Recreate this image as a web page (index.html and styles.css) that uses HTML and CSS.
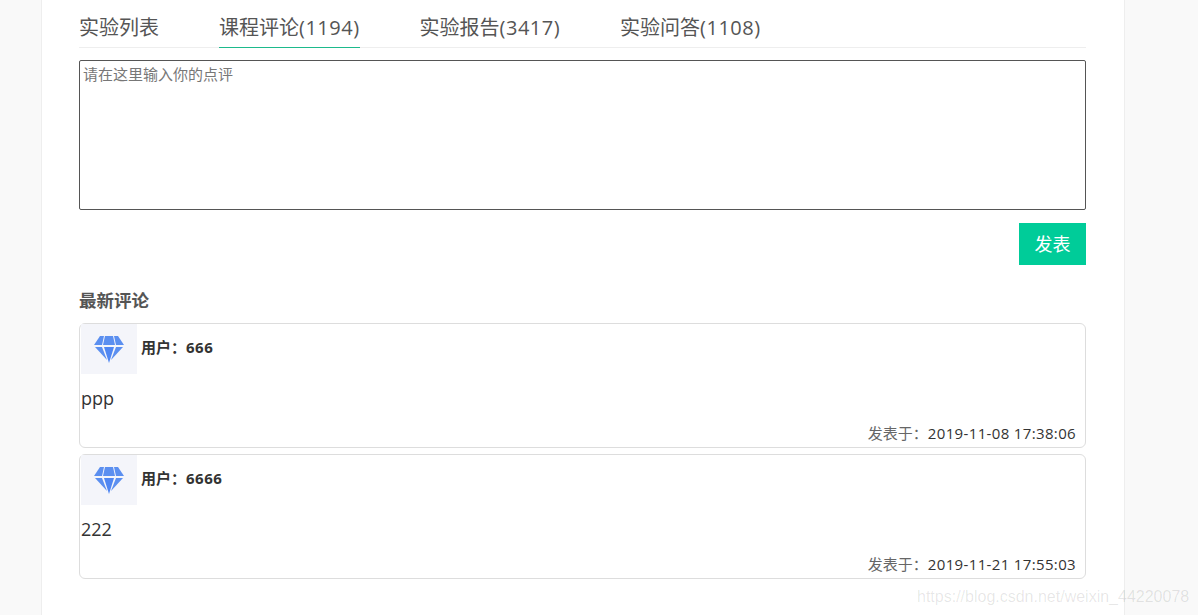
FILE: index.html
```html
<!DOCTYPE html>
<html lang="zh-CN">
<head>
    <meta charset="UTF-8">
    <meta name="viewport" content="width=device-width, initial-scale=1.0">
    <title>课程评论</title>
    <link rel="stylesheet" href="styles.css">
</head>
<body>
    <div class="container">
        <ul class="tabs">
            <li class="tab">实验列表</li>
            <li class="tab active">课程评论<span class="count">(1194)</span></li>
            <li class="tab">实验报告<span class="count">(3417)</span></li>
            <li class="tab">实验问答<span class="count">(1108)</span></li>
        </ul>

        <textarea class="comment-input" placeholder="请在这里输入你的点评"></textarea>

        <div class="controls">
            <button class="btn-submit">发表</button>
        </div>

        <h3 class="section-title">最新评论</h3>

        <div class="comment">
            <div class="comment-header">
                <div class="avatar">
                    <svg width="30" height="27" viewBox="0 0 30 27">
                        <path fill="#5b8ff0" d="M6 0h4L8 9H0z"/>
                        <path fill="#5b8ff0" d="M11 0h8l2 9H9z"/>
                        <path fill="#5b8ff0" d="M20 0h4l6 9h-8z"/>
                        <path fill="#5b8ff0" d="M1 11h7l5 13z"/>
                        <path fill="#4f86f2" d="M10 11h10l-5 16z"/>
                        <path fill="#5b8ff0" d="M29 11h-7l-5 13z"/>
                    </svg>
                </div>
                <span class="username">用户：<span class="user-id">666</span></span>
            </div>
            <div class="comment-body">ppp</div>
            <div class="comment-date">发表于：<span class="date-value">2019-11-08 17:38:06</span></div>
        </div>

        <div class="comment">
            <div class="comment-header">
                <div class="avatar">
                    <svg width="30" height="27" viewBox="0 0 30 27">
                        <path fill="#5b8ff0" d="M6 0h4L8 9H0z"/>
                        <path fill="#5b8ff0" d="M11 0h8l2 9H9z"/>
                        <path fill="#5b8ff0" d="M20 0h4l6 9h-8z"/>
                        <path fill="#5b8ff0" d="M1 11h7l5 13z"/>
                        <path fill="#4f86f2" d="M10 11h10l-5 16z"/>
                        <path fill="#5b8ff0" d="M29 11h-7l-5 13z"/>
                    </svg>
                </div>
                <span class="username">用户：<span class="user-id">6666</span></span>
            </div>
            <div class="comment-body">222</div>
            <div class="comment-date">发表于：<span class="date-value">2019-11-21 17:55:03</span></div>
        </div>
    </div>

    <div class="watermark">https://blog.csdn.net/weixin_44220078</div>
</body>
</html>
```

FILE: styles.css
```css
html, body {
    height: 100%;
}

body {
    margin: 0;
    background-color: #f9f9f9;
    font-family: "Open Sans", "Noto Sans CJK SC", sans-serif;
    color: #333;
    overflow: hidden;
}

.container {
    box-sizing: border-box;
    width: 1084px;
    height: 615px;
    margin-left: 41px;
    padding: 0 38px 0 37px;
    background: white;
    border-left: 1px solid #eee;
    border-right: 1px solid #eee;
}

.tabs {
    display: flex;
    gap: 60px;
    height: 48px;
    box-sizing: border-box;
    margin: 0;
    padding: 0;
    list-style: none;
    border-bottom: 1px solid #eee;
}

.tab {
    height: 48px;
    box-sizing: border-box;
    padding-top: 13px;
    font-size: 20px;
    line-height: 30px;
    color: #555;
}

.tab.active {
    border-bottom: 1px solid #1dba8c;
}

.count {
    letter-spacing: 0.5px;
}

.comment-input {
    display: block;
    box-sizing: border-box;
    width: 100%;
    height: 150px;
    margin: 12px 0 0;
    padding: 4px 3px;
    border: 1px solid #555;
    border-radius: 2px;
    outline: none;
    resize: none;
    font-family: inherit;
    font-size: 15px;
    line-height: 18px;
}

.comment-input::placeholder {
    color: #777;
}

.controls {
    display: flex;
    justify-content: flex-end;
    margin-top: 13px;
}

.btn-submit {
    width: 67px;
    height: 42px;
    padding: 0 0 2px;
    border: none;
    background: #00cc99;
    color: white;
    font-family: inherit;
    font-size: 18px;
}

.section-title {
    margin: 23px 0 11px;
    font-size: 17.5px;
    line-height: 24px;
    font-weight: 700;
    color: #555;
}

.comment {
    box-sizing: border-box;
    height: 125px;
    margin-bottom: 6px;
    padding: 0 9px 0 1px;
    border: 1px solid #ddd;
    border-radius: 6px;
}

.comment-header {
    display: flex;
    align-items: center;
    gap: 4px;
}

.avatar {
    display: flex;
    align-items: center;
    justify-content: center;
    width: 56px;
    height: 50px;
    background: #f4f5fa;
}

.username {
    padding-bottom: 5px;
    font-size: 15px;
    line-height: 20px;
    font-weight: 700;
    color: #333;
}

.user-id {
    letter-spacing: 0.5px;
}

.comment-body {
    margin-top: 10px;
    font-size: 18px;
    line-height: 28px;
    color: #333;
}

.comment-date {
    margin-top: 11px;
    text-align: right;
    font-size: 15px;
    line-height: 20px;
    color: #666;
}

.date-value {
    color: #333;
    letter-spacing: 0.35px;
}

.watermark {
    position: absolute;
    left: 917px;
    top: 586px;
    font-family: "Liberation Sans", sans-serif;
    font-size: 16px;
    line-height: 22px;
    color: rgba(0, 0, 0, 0.1);
}
```
